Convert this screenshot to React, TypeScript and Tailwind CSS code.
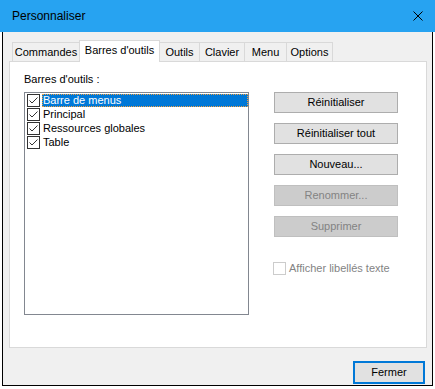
import React from "react";

const font = { fontFamily: '"Liberation Sans", Arial, sans-serif' };

function Check({ checked = true, disabled = false }: { checked?: boolean; disabled?: boolean }) {
  return (
    <svg width="13" height="13" viewBox="0 0 13 13" className="shrink-0 block">
      <rect x="0.5" y="0.5" width="12" height="12" fill="#fff" stroke={disabled ? "#cccccc" : "#333333"} />
      {checked && (
        <path d="M2.5 6.5 L5 9 L10.5 3.5" fill="none" stroke="#333333" strokeWidth="1" />
      )}
    </svg>
  );
}

function Btn({ label, disabled = false }: { label: string; disabled?: boolean }) {
  return (
    <div
      className={
        "w-[124px] h-[21px] flex items-center justify-center border text-[11px] leading-[13px] " +
        (disabled
          ? "bg-[#cccccc] border-[#bfbfbf] text-[#838383]"
          : "bg-[#e1e1e1] border-[#adadad] text-black")
      }
    >
      {label}
    </div>
  );
}

export default function App() {
  const items = ["Barre de menus", "Principal", "Ressources globales", "Table"];
  return (
    <div className="w-[435px] h-[389px] bg-white overflow-hidden" style={font}>
      {/* Title bar */}
      <div className="h-[32px] w-[435px] bg-[#27a3f1] flex items-center pl-[12px] pr-[12px]">
        <span className="text-[12px] leading-[14px] text-black">Personnaliser</span>
        <div className="flex-1" />
        <svg width="10" height="10" viewBox="0 0 10 10" className="mr-[0px]">
          <path d="M0.5 0.5 L9.5 9.5 M9.5 0.5 L0.5 9.5" stroke="#000" strokeWidth="1" />
        </svg>
      </div>
      {/* Window body */}
      <div className="ml-[2px] w-[431px] h-[354px] border-x border-b border-black bg-[#f0f0f0] flex flex-col">
        <div className="pt-[8px] pl-[9px] h-[29px] flex items-end text-[11px] leading-[13px] text-black">
          <div className="w-[67px] h-[19px] border-l border-t border-[#d9d9d9] flex items-center justify-center">Commandes</div>
          <div className="relative z-10 w-[81px] h-[22px] -mb-px bg-white border-l border-t border-r border-[#d9d9d9] flex items-center justify-center pb-[3px]">Barres d'outils</div>
          <div className="w-[40px] h-[19px] border-t border-r border-[#d9d9d9] flex items-center justify-center">Outils</div>
          <div className="w-[45px] h-[19px] border-t border-r border-[#d9d9d9] flex items-center justify-center">Clavier</div>
          <div className="w-[42px] h-[19px] border-t border-r border-[#d9d9d9] flex items-center justify-center">Menu</div>
          <div className="w-[46px] h-[19px] border-t border-r border-[#d9d9d9] flex items-center justify-center">Options</div>
        </div>
        <div className="ml-[6px] w-[418px] h-[287px] bg-white border border-[#d9d9d9] flex text-[11px] leading-[13px] text-black">
          <div className="pl-[14px] pt-[11px] flex flex-col">
            <div className="h-[13px]">Barres d'outils :</div>
            <div className="mt-[6px] w-[225px] h-[223px] border border-[#828790] pt-[1px] pl-[2px] flex flex-col">
              {items.map((it, i) => (
                <div key={it} className="h-[14px] flex items-start">
                  <Check />
                  <div
                    className={
                      "ml-[2px] h-[13px] flex-1 flex items-center pl-[1px] " +
                      (i === 0 ? "bg-[#0078d7] text-white outline outline-1 outline-dotted outline-[#f2a040] -outline-offset-1" : "")
                    }
                  >
                    {it}
                  </div>
                </div>
              ))}
            </div>
          </div>
          <div className="ml-[25px] pt-[30px] flex flex-col gap-[10px]">
            <Btn label="Réinitialiser" />
            <Btn label="Réinitialiser tout" />
            <Btn label="Nouveau..." />
            <Btn label="Renommer..." disabled />
            <Btn label="Supprimer" disabled />
            <div className="mt-[15px] -ml-px flex items-center h-[13px] text-[#838383]">
              <Check checked={false} disabled />
              <span className="ml-[3px]">Afficher libellés texte</span>
            </div>
          </div>
        </div>
        <div className="mt-[13px] flex justify-end pr-[7px]">
          <div className="w-[72px] h-[23px] border-2 border-[#0078d7] bg-[#e1e1e1] flex items-center justify-center text-[11px] leading-[13px] text-black">
            Fermer
          </div>
        </div>
      </div>
    </div>
  );
}
